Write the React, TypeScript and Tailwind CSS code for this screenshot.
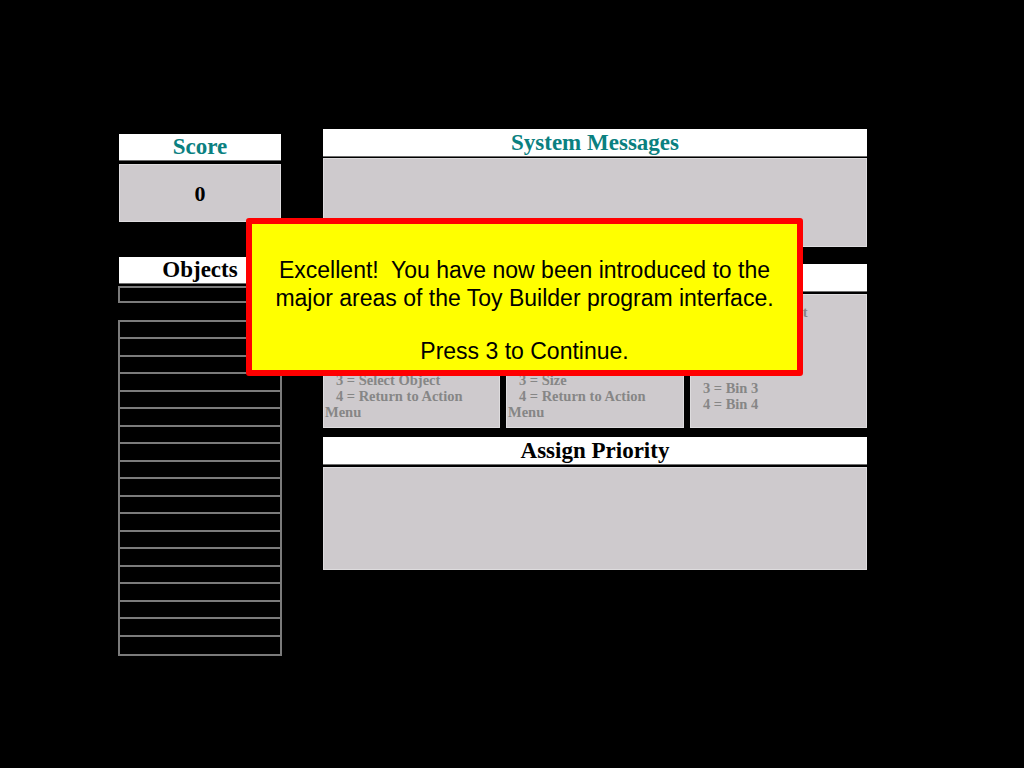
import React from "react";

const serif = { fontFamily: '"Liberation Serif", "Times New Roman", serif' };

function Header({ title, teal, small }: { title?: string; teal?: boolean; small?: boolean }) {
  return (
    <div
      style={serif}
      className={`bg-white border-b border-[#6e6e6e] text-center font-bold text-[23px] ${
        small ? "leading-[26px]" : "leading-[27px]"
      } ${teal ? "text-[#0a8080]" : "text-black"}`}
    >
      {title ?? "\u00a0"}
    </div>
  );
}

function Line({ children }: { children: React.ReactNode }) {
  return <div className="whitespace-pre leading-[16px]">{children}</div>;
}

export default function App() {
  const rows = Array.from({ length: 19 });

  return (
    <div className="relative w-[1024px] h-[768px] bg-black overflow-hidden">
      <div className="flex pl-[118px] pt-[129px]">
        {/* Left column */}
        <div className="w-[164px] mt-[5px] flex flex-col">
          <div className="mx-[1px]">
            <Header title="Score" teal small />
          </div>
          <div
            style={serif}
            className="mx-[1px] mt-[3px] h-[58px] bg-[#cecacd] border border-[#dedcde] flex items-center justify-center font-bold text-[22px] text-black"
          >
            0
          </div>

          <div className="mx-[1px] mt-[35px]">
            <Header title="Objects" small />
          </div>
          <div className="mt-[2px] h-[17px] border-2 border-[#7b7b7b]" />

          <div className="mt-[17px] h-[336px] border-2 border-[#7b7b7b] grid grid-rows-[repeat(19,1fr)] divide-y-2 divide-[#7b7b7b]">
            {rows.map((_, i) => (
              <div key={i} />
            ))}
          </div>
        </div>

        {/* Right column */}
        <div className="w-[544px] ml-[41px] flex flex-col">
          <Header title="System Messages" teal />
          <div className="mt-[1px] h-[89px] bg-[#cecacd] border border-[#dedcde]" />

          <div className="mt-[17px]">
            <Header />
          </div>
          <div
            style={serif}
            className="mt-[2px] h-[134px] flex gap-[6px] text-[14.5px] font-bold text-[#868686]"
          >
            <div className="w-[177px] bg-[#cecacd] border border-[#dedcde] flex flex-col justify-end pl-[1px] pb-[7px]">
              <Line>{"   3 = Select Object"}</Line>
              <Line>{"   4 = Return to Action"}</Line>
              <Line>Menu</Line>
            </div>
            <div className="w-[178px] bg-[#cecacd] border border-[#dedcde] flex flex-col justify-end pl-[1px] pb-[7px]">
              <Line>{"   3 = Size"}</Line>
              <Line>{"   4 = Return to Action"}</Line>
              <Line>Menu</Line>
            </div>
            <div className="flex-1 bg-[#cecacd] border border-[#dedcde] flex flex-col justify-between pl-[1px] pt-[9px] pb-[15px]">
              <Line>{"   Select the Object"}</Line>
              <div>
                <Line>{"   3 = Bin 3"}</Line>
                <Line>{"   4 = Bin 4"}</Line>
              </div>
            </div>
          </div>

          <div className="mt-[9px]">
            <Header title="Assign Priority" />
          </div>
          <div className="mt-[2px] h-[103px] bg-[#cecacd] border border-[#dedcde]" />
        </div>
      </div>

      {/* Tutorial popup */}
      <div
        style={{ fontFamily: '"Liberation Sans", Arial, sans-serif' }}
        className="absolute left-[246px] top-[218px] w-[557px] h-[158px] bg-[#ffff00] border-[6px] border-[#ff0000] rounded-[3px] text-center text-black text-[23px] pt-[32px]"
      >
        <p className="leading-[28px] whitespace-pre-wrap">
          {"Excellent!  You have now been introduced to the\nmajor areas of the Toy Builder program interface."}
        </p>
        <p className="leading-[28px] mt-[25px]">Press 3 to Continue.</p>
      </div>
    </div>
  );
}
